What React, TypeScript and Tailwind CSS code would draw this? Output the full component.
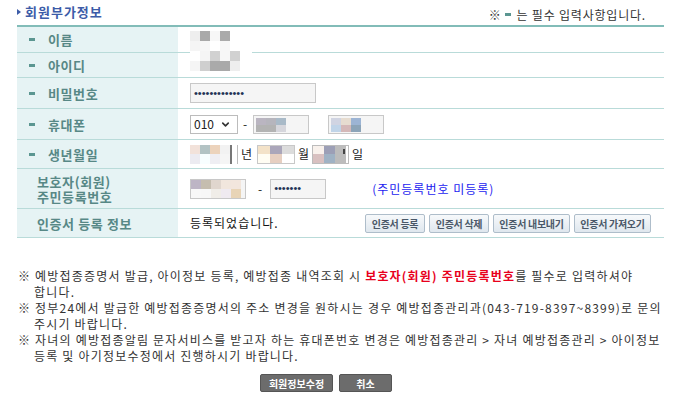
import { ChevronDown } from 'lucide-react';
import type { ReactNode } from 'react';

// 개인정보 가림 처리(모자이크) 셀
function Mosaic({ rows, w = 10, h = 10 }: { rows: string[][]; w?: number; h?: number }) {
  return (
    <div className="flex flex-col">
      {rows.map((r, i) => (
        <div key={i} className="flex">
          {r.map((c, j) => (
            <div key={j} style={{ width: w, height: h, backgroundColor: c }} />
          ))}
        </div>
      ))}
    </div>
  );
}

function Row({ label, req, h, children }: { label: ReactNode; req?: boolean; h: string; children?: ReactNode }) {
  return (
    <div className={`flex border-b border-[#b9dbd9] ${h}`}>
      <div className={`w-[161px] shrink-0 bg-[#e6f3f4] flex items-center ${req ? 'pl-[12px]' : 'pl-[20px]'}`}>
        {req && <span className="w-[6px] h-[3px] bg-[#5b9691] mr-[13px]" />}
        <span className="text-[13px] leading-[15px] font-bold text-[#578886] tracking-[0.6px]">{label}</span>
      </div>
      <div className="flex items-center pl-[12px] flex-1 text-[12px] text-[#222] tracking-[1px]">{children}</div>
    </div>
  );
}

function Dots({ n }: { n: number }) {
  return <span className="font-['Liberation_Sans',sans-serif] text-[11px] tracking-normal text-[#223355]">{'•'.repeat(n)}</span>;
}

function SmallBtn({ w, children }: { w: string; children: ReactNode }) {
  return (
    <div className={`${w} h-[19px] flex items-center justify-center border border-[#aebdca] rounded-[2px] bg-gradient-to-b from-[#f7f9fb] to-[#dfe7ee] text-[10px] font-bold text-[#4a5868] tracking-[-0.3px]`}>
      {children}
    </div>
  );
}

export default function App() {
  return (
    <div className="w-[676px] h-[396px] bg-white font-['Noto_Sans_CJK_KR',sans-serif] text-[#333] overflow-hidden">
      <div className="w-[647px] ml-[17px]">
        <div className="h-[25px] flex justify-between items-center">
          <div className="flex items-center mt-[-2px]">
            <span className="w-0 h-0 border-y-[3px] border-y-transparent border-l-[4px] border-l-[#3c5ca8] mr-[4px]" />
            <span className="text-[13px] font-bold text-[#3c5ca8] tracking-[1px]">회원부가정보</span>
          </div>
          <div className="flex items-center text-[12px] text-[#333] mr-[18px] mt-[4px] tracking-[0.8px]">
            <span>※</span>
            <span className="w-[6px] h-[3px] bg-[#5b9691] ml-[4px] mr-[5px]" />
            <span>는 필수 입력사항입니다.</span>
          </div>
        </div>

        <div className="border-t-2 border-[#82bcb8]">
          <Row label="이름" req h="h-[26px]">
            <div className="self-start mt-[4px]">
              <Mosaic rows={[['#eeeeee', '#a9a9a9', '#f7f7f7', '#aaaaaa'], ['#f5f5f5', '#f7f7f7', '#ffffff', '#f7f7f7']]} />
            </div>
          </Row>
          <Row label="아이디" req h="h-[25px]">
            <div className="self-start relative -top-[2px] bg-white w-[62px]">
              <Mosaic rows={[['#ffffff', '#f5f5f5', '#d1d1d1', '#f7f7f7', '#d1d1d1'], ['#f5f5f5', '#cfcfcf', '#aaaaaa', '#a9a9a9', '#eeeeee']]} />
            </div>
          </Row>
          <Row label="비밀번호" req h="h-[31px]">
            <div className="w-[126px] h-[20px] border border-[#c8c8c8] bg-[#f5f5f5] flex items-center pl-[3px]">
              <Dots n={13} />
            </div>
          </Row>
          <Row label="휴대폰" req h="h-[31px]">
            <div className="w-[48px] h-[19px] border border-[#bcbcbc] flex items-center pl-[3px] gap-[6px] text-[12px] text-[#222] tracking-normal">
              <span>010</span>
              <ChevronDown size={11} strokeWidth={3.5} className="text-[#333]" />
            </div>
            <span className="mx-[5px]">-</span>
            <div className="w-[56px] h-[19px] border border-[#c8c8c8] bg-[#f5f5f5] flex items-start p-[2px]">
              <Mosaic w={10} h={7} rows={[['#bab5c1', '#b6b5bd', '#a9bac8'], ['#b3b3b3', '#b3b3b3', '#d6d6dc']]} />
            </div>
            <div className="w-[19px]" />
            <div className="w-[56px] h-[19px] border border-[#c8c8c8] bg-[#f5f5f5] flex items-start p-[2px]">
              <Mosaic w={10} h={7} rows={[['#d0d4e2', '#e6dcd0', '#9cb4d4'], ['#c0d4e8', '#d4b8b8', '#8ca4b8']]} />
            </div>
          </Row>
          <Row label="생년월일" req h="h-[29px]">
            <div className="w-[48px] h-[19px] relative flex">
              <Mosaic w={10} h={9.5} rows={[['#f2e2da', '#b3c3c4', '#ecd3bc', '#f2f2f2'], ['#ecebf1', '#f8feff', '#efeef3', '#f5f5f5']]} />
              <div className="absolute left-[40px] top-0 w-[2px] h-[19px] bg-[#777]" />
              <div className="absolute right-0 top-0 w-[1px] h-[19px] bg-[#bcbcbc]" />
            </div>
            <span className="ml-[3px] mr-[4px]">년</span>
            <div className="w-[38px] h-[19px] border border-[#c8c8c8] flex">
              <Mosaic w={12} h={8.5} rows={[['#f3e2c8', '#aaa6ba', '#dcdcdc'], ['#fffdf3', '#e6cfc1', '#ffffff']]} />
            </div>
            <span className="ml-[3px] mr-[2px]">월</span>
            <div className="w-[37px] h-[19px] border border-[#bcbcbc] flex relative">
              <Mosaic w={11} h={8.5} rows={[['#f8f1ec', '#9c9fb6', '#bcbcbc'], ['#d8c0c0', '#9fb2c4', '#bcbcbc']]} />
              <div className="absolute right-[3px] top-[3px] w-[2px] h-[5px] bg-[#444]" />
            </div>
            <span className="ml-[3px]">일</span>
          </Row>
          <Row label={<>보호자(회원)<br />주민등록번호</>} h="h-[40px]">
            <div className="w-[56px] h-[20px] border border-[#c8c8c8] bg-[#f5f5f5] flex">
              <Mosaic w={10} h={9} rows={[['#bdb5c5', '#c5bdaf', '#e0d6ce', '#f1e6dd', '#f2e6dd'], ['#f8f8f8', '#f7f7f7', '#f0ede8', '#efeaf0', '#e8d4b6']]} />
            </div>
            <span className="ml-[12px] mr-[7px]">-</span>
            <div className="w-[56px] h-[20px] border border-[#c8c8c8] bg-[#f5f5f5] flex items-center pl-[3px]">
              <Dots n={7} />
            </div>
            <span className="ml-[46px] text-[#1c1cf0]">(주민등록번호 미등록)</span>
          </Row>
          <Row label="인증서 등록 정보" h="h-[29px]">
            <span className="text-[12px] text-[#111]">등록되었습니다.</span>
            <div className="ml-auto mr-[13px] flex gap-[4px] tracking-normal">
              <SmallBtn w="w-[60px]">인증서 등록</SmallBtn>
              <SmallBtn w="w-[60px]">인증서 삭제</SmallBtn>
              <SmallBtn w="w-[77px]">인증서 내보내기</SmallBtn>
              <SmallBtn w="w-[77px]">인증서 가져오기</SmallBtn>
            </div>
          </Row>
        </div>

        <div className="mt-[30px] ml-[1px] text-[12px] leading-[16px] text-[#333] whitespace-nowrap tracking-[1.2px]">
          <p className="pl-[16px] -indent-[16px]">
            ※ 예방접종증명서 발급, 아이정보 등록, 예방접종 내역조회 시 <b className="text-[#e8001c]">보호자(회원) 주민등록번호</b>를 필수로 입력하셔야
            <br />합니다.
          </p>
          <p className="pl-[16px] -indent-[16px]">
            ※ 정부24에서 발급한 예방접종증명서의 주소 변경을 원하시는 경우 예방접종관리과(043-719-8397~8399)로 문의
            <br />주시기 바랍니다.
          </p>
          <p className="pl-[16px] -indent-[16px]">
            ※ 자녀의 예방접종알림 문자서비스를 받고자 하는 휴대폰번호 변경은 예방접종관리 &gt; 자녀 예방접종관리 &gt; 아이정보
            <br />등록 및 아기정보수정에서 진행하시기 바랍니다.
          </p>
        </div>

        <div className="mt-[10px] ml-[243px] flex gap-[6px]">
          <div className="w-[73px] h-[18px] flex items-center justify-center bg-[#6c6c6c] border border-[#555] rounded-[2px] text-[10px] font-bold text-white">회원정보수정</div>
          <div className="w-[53px] h-[18px] flex items-center justify-center bg-[#6c6c6c] border border-[#555] rounded-[2px] text-[10px] font-bold text-white">취소</div>
        </div>
      </div>
    </div>
  );
}
